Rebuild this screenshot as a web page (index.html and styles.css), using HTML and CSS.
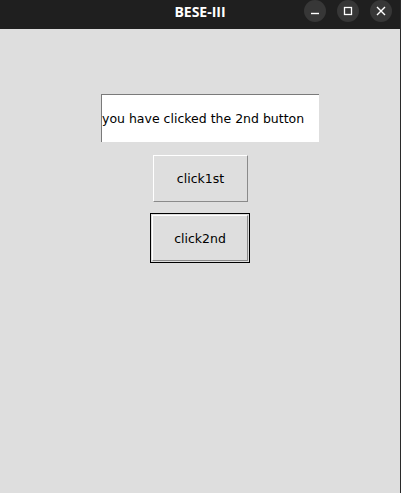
FILE: index.html
```html
<!DOCTYPE html>
<html>
<head>
<meta charset="utf-8">
<link rel="stylesheet" href="styles.css">
</head>
<body>
<div class="window">
  <div class="titlebar">
    <div class="title">BESE-III</div>
    <div class="controls">
      <div class="ctl">
        <svg width="10" height="10" viewBox="0 0 10 10"><path d="M1 7.5H9" stroke="#fff" stroke-width="1.4"/></svg>
      </div>
      <div class="ctl">
        <svg width="10" height="10" viewBox="0 0 10 10"><rect x="1.5" y="1.5" width="7" height="7" fill="none" stroke="#fff" stroke-width="1.3"/></svg>
      </div>
      <div class="ctl">
        <svg width="10" height="10" viewBox="0 0 10 10"><path d="M1 1L9 9M9 1L1 9" stroke="#fff" stroke-width="1.4"/></svg>
      </div>
    </div>
  </div>
  <div class="content">
    <div class="entry">you have clicked the 2nd button</div>
    <div class="btn btn1">click1st</div>
    <div class="btn-focus"><div class="btn btn2">click2nd</div></div>
  </div>
</div>
</body>
</html>
```
FILE: styles.css
```css
html, body {
  margin: 0;
  padding: 0;
}
body {
  width: 401px;
  height: 493px;
  background: #dedede;
  font-family: "DejaVu Sans", sans-serif;
}
.window {
  width: 401px;
  height: 493px;
  display: flex;
  flex-direction: column;
  background: #dedede;
  border-right: 1px solid #2a2a2a;
  box-sizing: border-box;
}
.titlebar {
  height: 29px;
  flex: none;
  background: #1f1f1f;
  position: relative;
  display: flex;
  align-items: center;
  justify-content: center;
}
.title {
  color: #ffffff;
  font-weight: bold;
  font-size: 14px;
  font-family: "Open Sans", "DejaVu Sans", sans-serif;
  margin-top: -6px;
}
.controls {
  position: absolute;
  right: 8px;
  top: 0;
  height: 23px;
  display: flex;
  gap: 11px;
}
.ctl {
  width: 22px;
  height: 22px;
  border-radius: 50%;
  background: #373737;
  display: flex;
  align-items: center;
  justify-content: center;
}
.content {
  display: flex;
  flex-direction: column;
  align-items: center;
  padding-top: 65px;
}
.entry {
  width: 218px;
  height: 48px;
  box-sizing: border-box;
  margin-left: 20px;
  background: #ffffff;
  border-top: 1px solid #7a7a7a;
  border-left: 1px solid #7a7a7a;
  display: flex;
  align-items: center;
  font-size: 12.5px;
  color: #000;
  white-space: nowrap;
}
.btn {
  box-sizing: border-box;
  display: flex;
  align-items: center;
  justify-content: center;
  font-size: 12.5px;
  color: #000;
  border-top: 1px solid #ffffff;
  border-left: 1px solid #ffffff;
  border-right: 1px solid #8a8a8a;
  border-bottom: 1px solid #8a8a8a;
}
.btn1 {
  width: 95px;
  height: 47px;
  margin-top: 13px;
  margin-left: 1px;
}
.btn-focus {
  margin-top: 11px;
  width: 100px;
  height: 50px;
  box-sizing: border-box;
  border: 1px solid #000;
  padding: 1px;
}
.btn2 {
  width: 100%;
  height: 100%;
}
```
